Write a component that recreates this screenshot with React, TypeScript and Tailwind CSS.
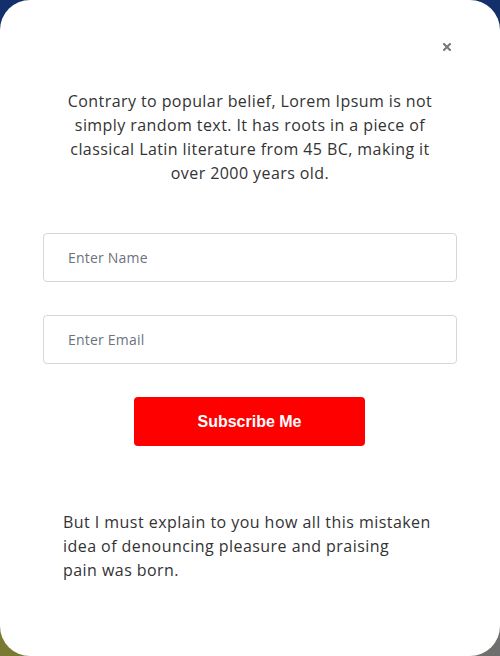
export default function App() {
  return (
    <div className="w-[500px] h-[656px] bg-[linear-gradient(to_bottom,#13306b_0%,#13306b_50%,transparent_50%),linear-gradient(to_right,#7b7a31,#6f6f6f)]">
      <div className="h-full rounded-[30px] bg-white font-['Open_Sans',sans-serif] flex flex-col">
        <div className="flex justify-end pt-[43px] pr-[49px]">
          <button className="w-[8px] h-[8px] text-[#777]">
            <svg viewBox="0 0 8 8" width="8" height="8">
              <path d="M1 1L7 7M7 1L1 7" stroke="currentColor" strokeWidth="2" strokeLinecap="square" />
            </svg>
          </button>
        </div>

        <p className="mt-[38px] text-center text-[16px] leading-[24px] text-[#333] tracking-[0.42px]">
          Contrary to popular belief, Lorem Ipsum is not
          <br />
          simply random text. It has roots in a piece of
          <br />
          classical Latin literature from 45 BC, making it
          <br />
          over 2000 years old.
        </p>

        <form className="mt-[48px] px-[43px] flex flex-col gap-[33px]">
          <input
            type="text"
            placeholder="Enter Name"
            className="h-[49px] w-full rounded-[4px] border border-[#d4d6db] px-[24px] text-[14px] tracking-[0.2px] text-[#333] placeholder:text-[#6b7280] outline-none"
          />
          <input
            type="email"
            placeholder="Enter Email"
            className="h-[49px] w-full rounded-[4px] border border-[#d4d6db] px-[24px] text-[14px] tracking-[0.2px] text-[#333] placeholder:text-[#6b7280] outline-none"
          />
          <div className="flex">
            <button
              type="button"
              className="ml-[91px] w-[231px] h-[49px] rounded-[4px] bg-[#ff0000] text-white font-['Liberation_Sans',Arial,sans-serif] font-bold text-[16px]"
            >
              Subscribe Me
            </button>
          </div>
        </form>

        <p className="mt-[64px] pl-[63px] text-[16px] leading-[24px] text-[#333] tracking-[0.45px]">
          But I must explain to you how all this mistaken
          <br />
          idea of denouncing pleasure and praising
          <br />
          pain was born.
        </p>
      </div>
    </div>
  )
}
